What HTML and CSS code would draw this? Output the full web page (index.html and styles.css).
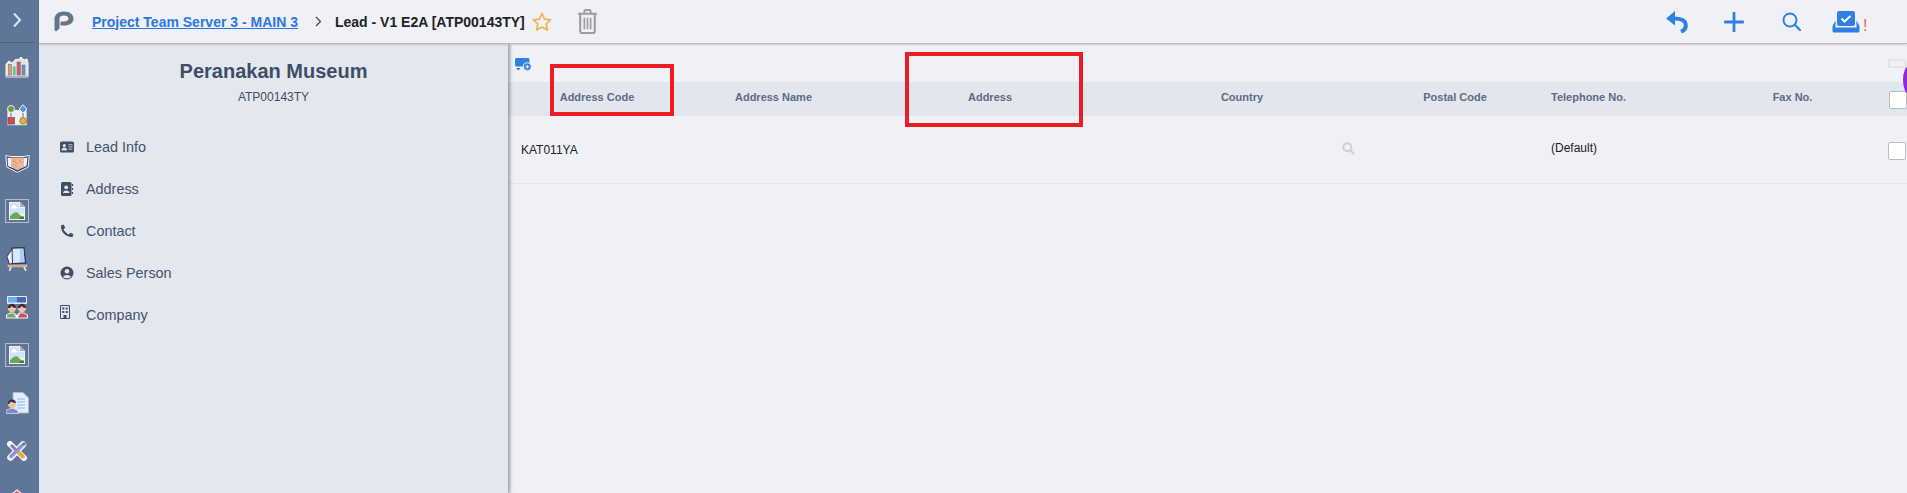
FILE: index.html
```html
<!DOCTYPE html>
<html lang="en">
<head>
<meta charset="utf-8">
<title>Lead - V1 E2A</title>
<link rel="stylesheet" href="styles.css">
</head>
<body>
<div class="app">
  <nav class="rail">
    <div class="rail-head">
      <svg class="rail-chevron" viewBox="0 0 10 16"><path d="M2 1.500 8 8l-6 6.500" fill="none" stroke="#dfe5ee" stroke-width="2"/></svg>
    </div>
    <div class="rail-item">
      <svg width="24" height="21" viewBox="0 0 24 21"><path d="M1 20V7l3-3 3 2 4-4 2 1 3-3 3 3 3-1 1 4v14z" fill="#e6e3e4" stroke="#f6f6f6" stroke-width="1"/><rect x="3.500" y="7.500" width="3" height="10.500" fill="#dba44b" stroke="#77708a" stroke-width=".6"/><rect x="8" y="9.500" width="2.600" height="8.500" fill="#6fb89e"/><rect x="12" y="5" width="3.400" height="13" fill="#cf5c62" stroke="#77708a" stroke-width=".6"/><rect x="17" y="8" width="3" height="10" fill="#5a97c4" stroke="#77708a" stroke-width=".6"/><path d="M1 19.500h22" stroke="#a7acb8" stroke-width="1.500"/></svg>
    </div>
    <div class="rail-item">
      <svg width="22" height="22" viewBox="0 0 22 22"><path d="M1.500 6h19v15h-19z" fill="#f1f1f4" stroke="#c9ccd4" stroke-width=".6"/><circle cx="5" cy="5" r="3.500" fill="#6c9a3e" stroke="#eef0f4"/><path d="M17 .8 21 5l-4 4.200L13 5z" fill="#4f9ee0" stroke="#eef0f4"/><rect x="2" y="13.500" width="6.500" height="6.500" fill="#dd4a45" stroke="#556" stroke-width=".7"/><circle cx="17" cy="16.800" r="3.300" fill="#eeb036" stroke="#7a6a50" stroke-width=".7"/><path d="M5 9v4M17 9v4M9 5h4" stroke="#667" stroke-width="1"/></svg>
    </div>
    <div class="rail-item">
      <svg width="25" height="19" viewBox="0 0 25 19"><path d="M.8 1.500 6 2.500h13l5.200-1-1 11.500-10.700 5.300L1.800 13z" fill="#35386f" stroke="#f4f6fb" stroke-width="1"/><path d="M2.500 3.500 6 4v8l6.500 4L3 12z" fill="#e8f4fd"/><path d="M22.500 3.500 19 4v8l-6.500 4 9-4z" fill="#e8f4fd"/><path d="M6 3.500h13v8.500l-6.500 4.500L6 12z" fill="#f1b792"/><path d="M9 7l4 3M8 10l4 3M13 5l4 4M10 5l-2 3" stroke="#cf8d6a" stroke-width=".9" fill="none"/></svg>
    </div>
    <div class="rail-item">
      <span class="broken"><svg width="16" height="18" viewBox="0 0 16 18"><path d="M0 0h11l5 5v13H0z" fill="#eef0f4"/><path d="M11 0v5h5z" fill="#a9afb9"/><path d="M1 1h9v5h5v5L1 13z" fill="#cfe3f6"/><path d="M3 5a2 2 0 0 1 4 0h1v1.500H2V5z" fill="#fff"/><path d="M1 17v-3c4-4 7-5 9-2l3 3 2-1v3z" fill="#69a94f"/><path d="M10 17l3-3 2 2v1z" fill="#2f7d3b"/></svg></span>
    </div>
    <div class="rail-item">
      <svg width="24" height="24" viewBox="0 0 24 24"><path d="M7 1 19 .5l1.500 15.500-16 1z" fill="#d6e8fb" stroke="#35386a" stroke-width="1.500"/><path d="M2 9.500 7 2l.5 14-3 1.500z" fill="#f4f6fb" stroke="#35386a" stroke-width="1"/><path d="M15 2h3.500l1 13H15z" fill="#a9d0f3"/><path d="M3 18h19v1.800H3z" fill="#d69a3e" stroke="#f4f0e6" stroke-width=".5"/><path d="M6 20 4.500 24M19 20l2 4" stroke="#ece6da" stroke-width="1.700"/></svg>
    </div>
    <div class="rail-item">
      <svg width="22" height="23" viewBox="0 0 22 23"><rect x="1" y="0" width="20" height="8" rx="1" fill="#e8ecf3"/><rect x="2" y="1" width="9" height="5.500" fill="#63b4ec"/><rect x="11" y="1" width="9" height="5.500" fill="#4f68ad"/><path d="M0 22.500v-3.500l4-2.500h4l3 2.500 2-2.500h5l4 2.500v3.500z" fill="#f2f3f6"/><path d="M1 21.500v-2l3-2h4l2 4z" fill="#7ea264"/><path d="M12 21.500l2-4h4l3 2v2z" fill="#cc4f53"/><circle cx="6" cy="12" r="4.200" fill="#f0c3a6"/><circle cx="16" cy="12" r="4.200" fill="#f0c3a6"/><path d="M1.800 12a4.200 4.200 0 0 1 8.400 0c-2 0-4-1-5-2l-1 2zM11.800 12a4.200 4.200 0 0 1 8.400 0c-2 0-4-1-5-2l-1 2z" fill="#3a2a3a"/></svg>
    </div>
    <div class="rail-item">
      <span class="broken"><svg width="16" height="18" viewBox="0 0 16 18"><path d="M0 0h11l5 5v13H0z" fill="#eef0f4"/><path d="M11 0v5h5z" fill="#a9afb9"/><path d="M1 1h9v5h5v5L1 13z" fill="#cfe3f6"/><path d="M3 5a2 2 0 0 1 4 0h1v1.500H2V5z" fill="#fff"/><path d="M1 17v-3c4-4 7-5 9-2l3 3 2-1v3z" fill="#69a94f"/><path d="M10 17l3-3 2 2v1z" fill="#2f7d3b"/></svg></span>
    </div>
    <div class="rail-item">
      <svg width="23" height="22" viewBox="0 0 23 22"><path d="M7 .5h10l5.500 5.500v15H7z" fill="#e6eefb" stroke="#aeb5c4" stroke-width="1"/><path d="M11 7h8M11 10h8M11 13h8M11 16h8" stroke="#7dbcee" stroke-width="1.200"/><path d="M0 21.500v-3l4-2h4l4 2v3z" fill="#8688c8" stroke="#e8e8f2" stroke-width=".7"/><circle cx="6" cy="12" r="4" fill="#f0c3a6"/><path d="M2 12a4 4 0 0 1 8-1c-2 0-4-1-5-1.500L3 12z" fill="#3a2a4a"/></svg>
    </div>
    <div class="rail-item">
      <svg width="20" height="20" viewBox="0 0 20 20"><path d="M3 3 17 17" stroke="#f2f3f7" stroke-width="6" stroke-linecap="round"/><path d="M16 3.500 3.500 16.500" stroke="#f2f3f7" stroke-width="6.500" stroke-linecap="round"/><path d="M4 4 16 16" stroke="#7c7ec8" stroke-width="3"/><path d="M11 10.500l5 5" stroke="#eba73c" stroke-width="3.600" stroke-linecap="round"/><path d="M15 4.500 4 15.500" stroke="#8f92d8" stroke-width="3.500" stroke-linecap="round"/><circle cx="17" cy="3" r="1.800" fill="#5f7698"/></svg>
    </div>
    <div class="rail-item">
      <svg width="22" height="20" viewBox="0 0 22 20"><path d="M11 1 21 9v10H1V9z" fill="#d8545c" stroke="#f4f4f6" stroke-width="1.200"/><path d="M7 9h8v10H7z" fill="#f1e6dd"/></svg>
    </div>
  </nav>

  <div class="workspace">
    <header class="topbar">
      <svg class="logo" viewBox="0 0 21 21"><path d="M1.500 7C2.500 2.500 6.500.5 11 .5c5.500 0 9.500 2.800 9.500 7 0 4.500-4 7-9 7H7.500v-4H11c2.500 0 4.500-1 4.500-3S13.500 4.500 11 4.500c-2.400 0-4 .8-4.500 2.500v10.500L3 20.500l-1.500-1.500z" fill="#63758b"/></svg>
      <a class="crumb-link" href="#">Project Team Server 3 - MAIN 3</a>
      <svg class="crumb-sep" viewBox="0 0 7 11"><path d="M1 1l4.500 4.500L1 10" fill="none" stroke="#444" stroke-width="1.200"/></svg>
      <span class="crumb-current">Lead - V1 E2A [ATP00143TY]</span>
      <svg class="star" viewBox="0 0 20 19"><path d="M10 1.500l2.600 5.600 6 .7-4.400 4.200 1.200 6L10 15l-5.400 3 1.200-6L1.400 7.800l6-.7z" fill="none" stroke="#f4b24a" stroke-width="1.700" stroke-linejoin="round"/></svg>
      <svg class="trash" viewBox="0 0 20 24"><path d="M1 4.500h18M7 4.500V2.500a1.500 1.500 0 0 1 1.500-1.500h3A1.500 1.500 0 0 1 13 2.500v2" fill="none" stroke="#9c9c9c" stroke-width="1.800"/><path d="M3 5v16a2 2 0 0 0 2 2h10a2 2 0 0 0 2-2V5" fill="none" stroke="#9c9c9c" stroke-width="2"/><path d="M7 8.500v11M10 8.500v11M13 8.500v11" stroke="#9c9c9c" stroke-width="1.600"/></svg>
      <div class="actions">
        <svg class="act-undo" viewBox="0 0 22 22"><path d="M9 0 0 7.500l9 7z" fill="#2f80e4"/><path d="M6 7.500c8 -.5 13.800 1.500 13.800 7 0 3-1.800 5-4.800 6.300" fill="none" stroke="#2f80e4" stroke-width="4"/></svg>
        <svg class="act-plus" viewBox="0 0 20 20"><path d="M10 1v18M1 10h18" stroke="#2f80e4" stroke-width="2.800" stroke-linecap="round"/></svg>
        <svg class="act-search" viewBox="0 0 19 19"><circle cx="8" cy="8" r="6.500" fill="none" stroke="#2f80e4" stroke-width="2"/><path d="M12.800 12.800 18 18" stroke="#2f80e4" stroke-width="2.200" stroke-linecap="round"/></svg>
        <svg class="act-tray" viewBox="0 0 28 22"><rect x="5" y="0" width="18" height="15" rx="2" fill="#2f80e4"/><path d="M9.500 7.500l3 3 6-5.500" fill="none" stroke="#fff" stroke-width="2"/><path d="M3.500 9.500 .5 15v5a1.500 1.500 0 0 0 1.500 1.500h24a1.500 1.500 0 0 0 1.500-1.500v-5l-3-5.500v7h-21z" fill="#2f80e4"/></svg>
        <span class="alert">!</span>
      </div>
    </header>

    <main class="body">
      <aside class="panel">
        <h1 class="panel-title">Peranakan Museum</h1>
        <p class="panel-code">ATP00143TY</p>
        <ul class="menu">
          <li class="menu-item"><svg class="menu-icon" viewBox="0 0 14 12"><rect width="14" height="11" y=".5" rx="1.500" fill="#3f4d66"/><circle cx="4.300" cy="4.500" r="1.500" fill="#e3e8f0"/><path d="M1.800 9c0-2.800 5-2.800 5 0zM8.500 3.800h4M8.500 6h4M8.500 8.200h4" fill="#e3e8f0" stroke="#e3e8f0" stroke-width=".8"/></svg>Lead Info</li>
          <li class="menu-item"><svg class="menu-icon" viewBox="0 0 14 14"><rect x="1" y="0" width="10.500" height="14" rx="1.500" fill="#3f4d66"/><path d="M12.500 2v2M12.500 6v2M12.500 10v2" stroke="#3f4d66" stroke-width="1.200"/><circle cx="6.200" cy="5.300" r="1.900" fill="#e3e8f0"/><path d="M3 11c0-3.500 6.500-3.500 6.500 0z" fill="#e3e8f0"/></svg>Address</li>
          <li class="menu-item"><svg class="menu-icon" viewBox="0 0 14 14"><path d="M3.500.5 1 1.500C.5 8 6 13.500 12.500 13l1-2.700-3.200-1.500-1.500 1.800C6.800 9.700 4.300 7.200 3.500 5.200l1.800-1.500z" fill="#3f4d66"/></svg>Contact</li>
          <li class="menu-item"><svg class="menu-icon" viewBox="0 0 14 14"><circle cx="7" cy="7" r="6.500" fill="#3f4d66"/><circle cx="7" cy="5.300" r="2.300" fill="#e3e8f0"/><path d="M3 11c1-2.800 7-2.800 8 0-2 1.800-6 1.800-8 0z" fill="#e3e8f0"/></svg>Sales Person</li>
          <li class="menu-item"><svg class="menu-icon menu-icon-building" viewBox="0 0 10 14"><path d="M.5.500h9v13h-9z" fill="#e3e8f0" stroke="#3f4d66"/><path d="M2.300 2.500h2v2h-2zM5.700 2.500h2v2h-2zM2.300 6h2v2h-2zM5.700 6h2v2h-2zM3.500 10h3v3.500h-3z" fill="#3f4d66"/></svg>Company</li>
        </ul>
      </aside>

      <section class="content">
        <div class="toolbar">
          <svg class="add-address" viewBox="0 0 17 13"><path d="M0 1.500A1.500 1.500 0 0 1 1.500 0H13a1.500 1.500 0 0 1 1.500 1.500V5H10v3.500H1.500A1.500 1.500 0 0 1 0 7z" fill="#2f80e4"/><path d="M1 10h4.500l-2.200 2.500z" fill="#2f80e4"/><circle cx="12.300" cy="8.800" r="4" fill="#2f80e4" stroke="#eff1f6"/><path d="M10.500 8.800h3.600M12.300 7v3.600" stroke="#fff"/></svg>
        </div>
        <div class="grid-row grid-head">
          <div class="cell">Address Code</div>
          <div class="cell">Address Name</div>
          <div class="cell">Address</div>
          <div class="cell">Country</div>
          <div class="cell">Postal Code</div>
          <div class="cell cell-left">Telephone No.</div>
          <div class="cell">Fax No.</div>
          <div class="cell cell-check"><span class="check"></span></div>
        </div>
        <div class="grid-row grid-data">
          <div class="cell-data cell-code">KAT011YA</div>
          <div class="cell-data"></div>
          <div class="cell-data"></div>
          <div class="cell-data cell-lookup"><svg class="lookup" viewBox="0 0 13 13"><circle cx="5.300" cy="5.300" r="4" fill="none" stroke="#cfcfcf" stroke-width="2"/><path d="M8.300 8.300 12 12" stroke="#cfcfcf" stroke-width="2"/></svg></div>
          <div class="cell-data"></div>
          <div class="cell-data cell-phone">(Default)</div>
          <div class="cell-data"></div>
          <div class="cell-data cell-check"><span class="check"></span></div>
        </div>

        <span class="highlight highlight-code"></span>
        <span class="highlight highlight-address"></span>
        <span class="ghost-icon"></span>
        <span class="purple-blob"></span>
      </section>
    </main>
  </div>
</div>
</body>
</html>
```
FILE: styles.css
```css
* { box-sizing: border-box; }
html, body { margin: 0; height: 100%; overflow: hidden; }
body { font-family: "Liberation Sans", Arial, sans-serif; background: #eff1f6; color: #222; }

.app { display: flex; height: 100vh; }

/* left icon rail */
.rail { width: 39px; flex: none; background: #5f7698; overflow: hidden; display: flex; flex-direction: column; }
.rail-head { height: 43px; width: 34px; flex: none; border-bottom: 1px solid #55606f; display: flex; align-items: center; padding-left: 12px; }
.rail-chevron { width: 10px; height: 16px; margin-top: -3px; }
.rail-item { height: 48px; flex: none; width: 34px; display: flex; align-items: center; justify-content: center; }
.broken { width: 24px; height: 24px; border: 1px solid #b4bcc8; display: flex; align-items: center; justify-content: center; }

.workspace { flex: 1; min-width: 0; display: flex; flex-direction: column; }

/* top bar */
.topbar { height: 44px; flex: none; display: flex; align-items: center; background: #eff1f6; border-bottom: 1px solid #b9bbc0; box-shadow: 0 1px 2px rgba(0, 0, 0, .15); position: relative; z-index: 3; }
.logo { width: 21px; height: 21px; margin-left: 14px; }
.crumb-link { margin-left: 18px; font-size: 14px; font-weight: 700; color: #2b78e0; text-decoration: underline; }
.crumb-sep { width: 7px; height: 11px; margin-left: 17px; }
.crumb-current { margin-left: 13px; font-size: 14px; font-weight: 700; color: #222; }
.star { width: 20px; height: 19px; margin-left: 7px; }
.trash { width: 21px; height: 25px; margin-left: 25px; }
.actions { margin-left: auto; display: flex; align-items: center; padding-right: 37px; }
.act-undo { width: 22px; height: 22px; }
.act-plus { width: 20px; height: 20px; margin-left: 36px; }
.act-search { width: 19px; height: 19px; margin-left: 38px; }
.act-tray { width: 28px; height: 22px; margin-left: 31px; }
.alert { width: 7px; margin-left: 3px; margin-top: 8px; font-size: 16px; color: #f0595a; }

.body { flex: 1; display: flex; min-height: 0; }

/* record panel */
.panel { width: 469px; flex: none; background: #e3e8f0; box-shadow: 2px 0 3px rgba(0, 0, 0, .35); position: relative; z-index: 2; color: #3f4d66; }
.panel-title { margin: 15px 0 0; text-align: center; font-size: 20px; line-height: 24px; font-weight: 700; }
.panel-code { margin: 7px 0 0; text-align: center; font-size: 12px; line-height: 14px; }
.menu { list-style: none; margin: 22px 0 0; padding: 0 0 0 21px; }
.menu-item { height: 42px; display: flex; align-items: center; font-size: 14.400px; color: #44526b; }
.menu-icon { width: 14px; height: 14px; margin-right: 12px; flex: none; }
.menu-icon-building { width: 10px; margin-right: 16px; margin-top: -6px; }

/* address grid */
.content { flex: 1; min-width: 0; position: relative; }
.toolbar { height: 38px; padding: 14px 0 0 7px; }
.add-address { width: 17px; height: 13px; display: block; }
.grid-row { display: grid; grid-template-columns: 177px 178px 255px 249px 177px 161px 176px 26px; }
.grid-head { height: 34px; background: #e2e6ee; font-size: 11px; font-weight: 700; color: #5d6b85; }
.cell { display: flex; align-items: center; justify-content: center; padding-bottom: 5px; border-right: 1px solid #e8e9e6; }
.cell:first-child { padding-left: 2px; }
.cell-left { justify-content: flex-start; padding-left: 7px; }
.cell-check { border-right: 0; padding: 2px 0 0 7px; display: flex; align-items: center; }
.grid-data { height: 68px; border-bottom: 1px solid #e3e5ea; font-size: 12px; color: #222; }
.cell-data { display: flex; align-items: center; }
.cell-code { padding-left: 13px; }
.cell-lookup { justify-content: flex-end; padding-right: 12px; }
.lookup { width: 13px; height: 13px; margin-top: -2px; }
.cell-phone { padding-left: 7px; margin-top: -3px; }
.check { width: 18px; height: 18px; background: #fff; border: 1px solid #bdbdbd; border-radius: 2px; flex: none; }

/* annotations over the grid */
.highlight { position: absolute; border: 4px solid #ec1c24; }
.highlight-code { left: 42px; top: 20px; width: 124px; height: 52px; }
.highlight-address { left: 397px; top: 8px; width: 178px; height: 75px; }
.ghost-icon { position: absolute; right: 1px; top: 15px; width: 18px; height: 9px; border: 2px solid #e2e4e8; border-radius: 1px; }
.purple-blob { position: absolute; right: -8px; top: 22px; width: 12px; height: 28px; border-radius: 50%; background: #8a2be2; }
```
